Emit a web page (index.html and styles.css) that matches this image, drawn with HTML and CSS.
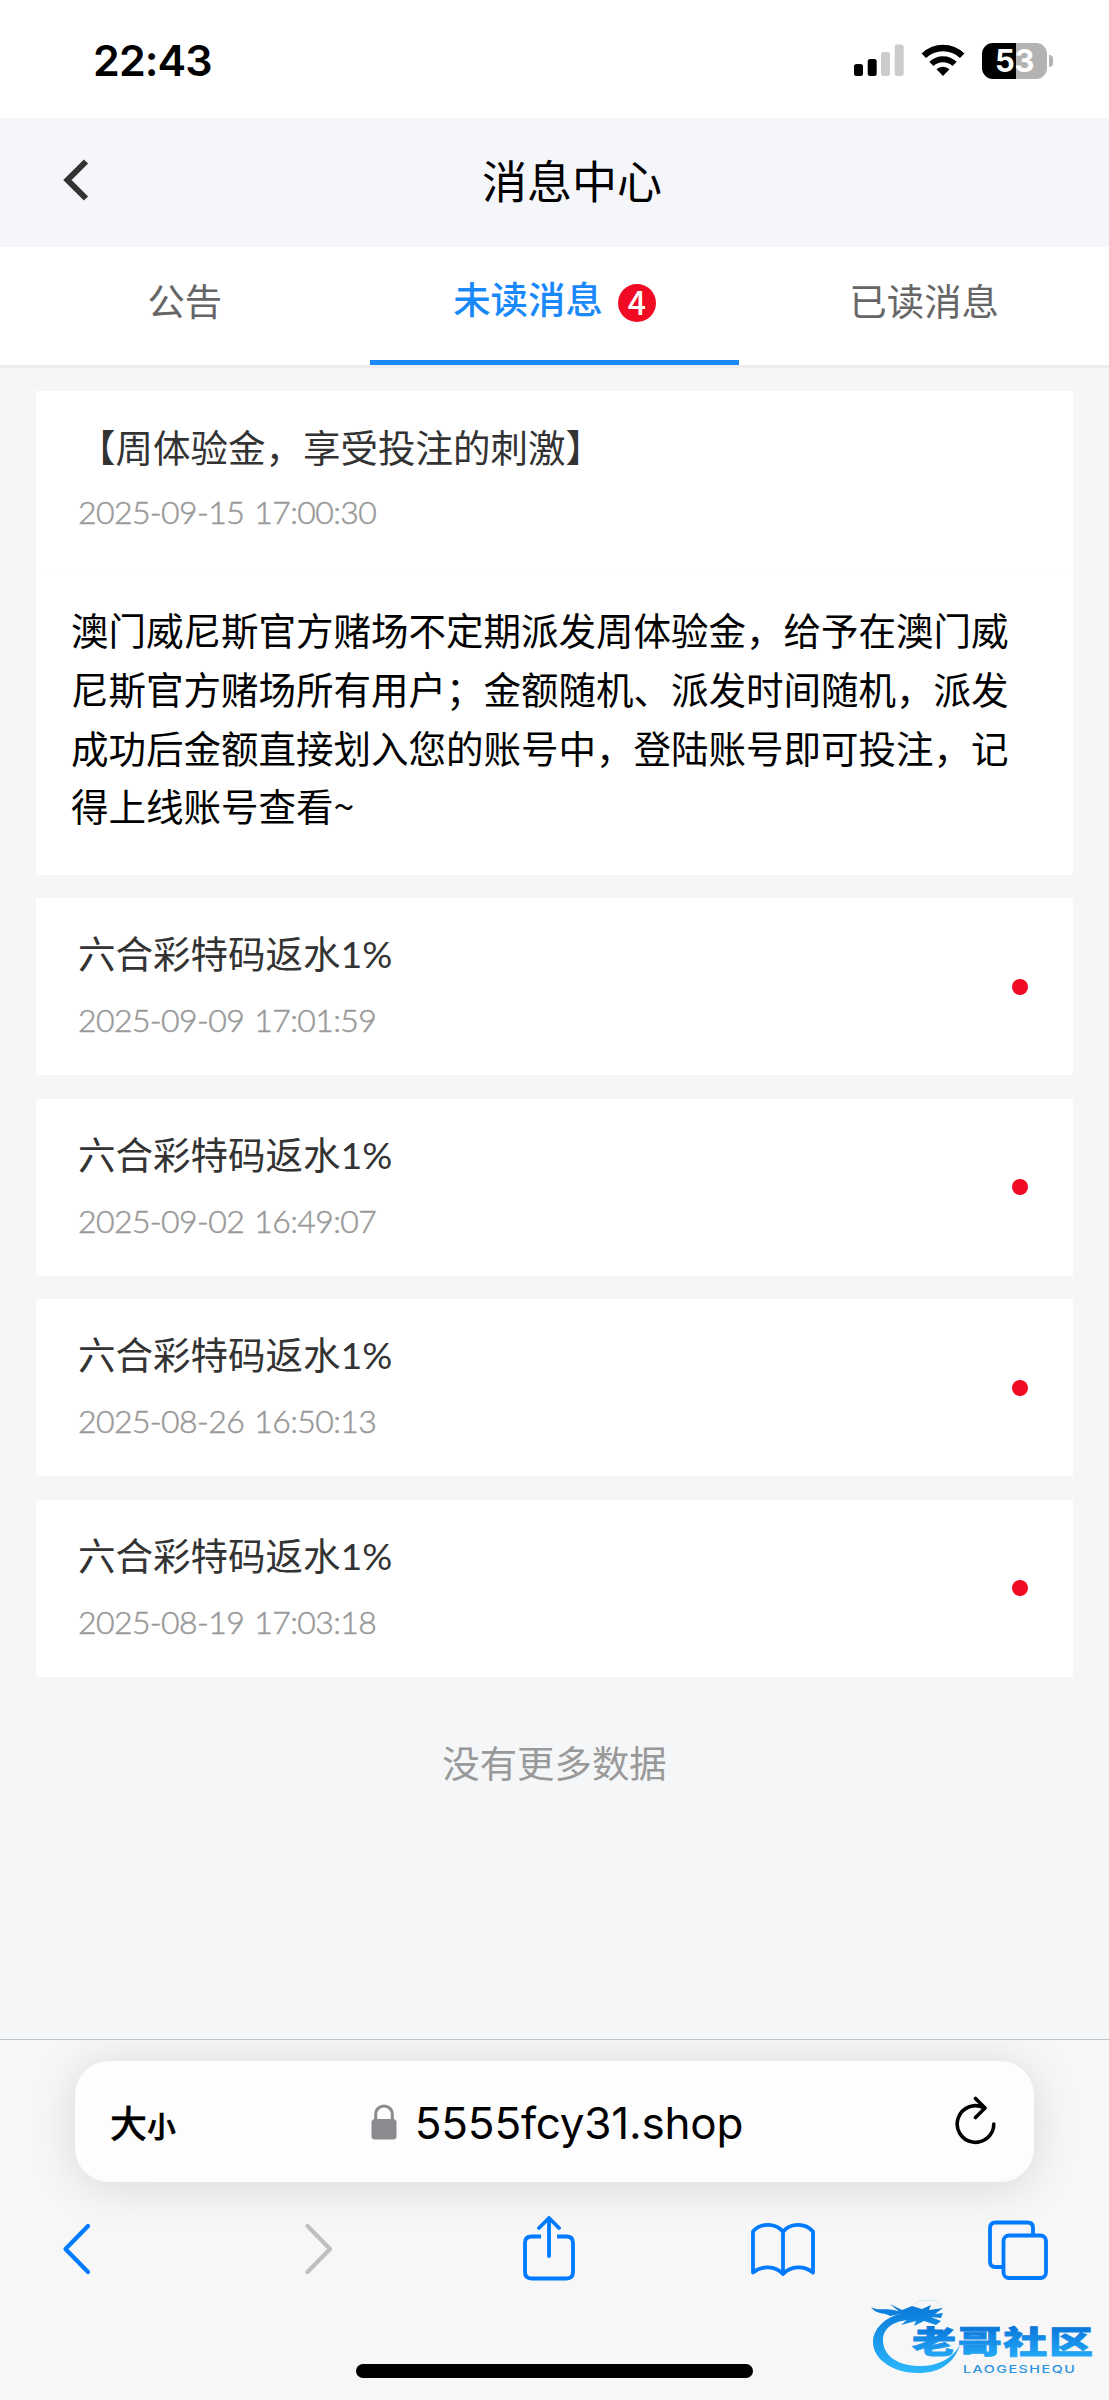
FILE: index.html
```html
<!DOCTYPE html>
<html lang="zh-CN">
<head>
  <meta charset="UTF-8">
  <meta name="viewport" content="width=device-width, initial-scale=1.0">
  <title>消息中心</title>
  <link rel="stylesheet" href="styles.css">
</head>
<body>
  <div class="status-bar">
    <span class="time">22:43</span>
    <div class="status-icons">
      <svg class="signal" width="50" height="36" viewBox="0 0 50 36">
        <rect x="0" y="21" width="9" height="12" rx="2.5"/>
        <rect x="13.7" y="16" width="9" height="17" rx="2.5"/>
        <rect x="27" y="9" width="9" height="24" rx="2.5" fill="#ccc"/>
        <rect x="40.7" y="1.5" width="9" height="31.5" rx="2.5" fill="#ccc"/>
      </svg>
      <svg class="wifi" width="44" height="36" viewBox="0 0 44 36">
        <path d="M0.6 10.5 A30.5 30.5 0 0 1 43.4 10.5 L39 15 A25 25 0 0 0 5 15 Z"/>
        <path d="M8.3 18.7 A20 20 0 0 1 35.7 18.7 L31.5 23 A14 14 0 0 0 12.5 23 Z"/>
        <path d="M15.5 26.3 A9.3 9.3 0 0 1 28.5 26.3 L22 33 Z"/>
      </svg>
      <div class="battery"><span>53</span></div>
    </div>
  </div>

  <header class="header">
    <svg class="back" width="26" height="42" viewBox="0 0 26 42">
      <path d="M23 2.5 L4.5 21 L23 39.5" fill="none" stroke="#333" stroke-width="6"/>
    </svg>
    <h1>消息中心</h1>
  </header>

  <nav class="tabs">
    <a class="tab">公告</a>
    <a class="tab active">未读消息<span class="badge">4</span></a>
    <a class="tab">已读消息</a>
  </nav>

  <main class="message-list">
    <article class="message open">
      <div class="message-head">
        <div>
          <h2>【周体验金，享受投注的刺激】</h2>
          <time>2025-09-15 17:00:30</time>
        </div>
      </div>
      <p class="message-body">澳门威尼斯官方赌场不定期派发周体验金，给予在澳门威尼斯官方赌场所有用户；金额随机、派发时间随机，派发成功后金额直接划入您的账号中，登陆账号即可投注，记得上线账号查看~</p>
    </article>
    <article class="message">
      <div class="message-head">
        <div>
          <h2>六合彩特码返水<span class="latin">1%</span></h2>
          <time>2025-09-09 17:01:59</time>
        </div>
        <i class="dot"></i>
      </div>
    </article>
    <article class="message">
      <div class="message-head">
        <div>
          <h2>六合彩特码返水<span class="latin">1%</span></h2>
          <time>2025-09-02 16:49:07</time>
        </div>
        <i class="dot"></i>
      </div>
    </article>
    <article class="message">
      <div class="message-head">
        <div>
          <h2>六合彩特码返水<span class="latin">1%</span></h2>
          <time>2025-08-26 16:50:13</time>
        </div>
        <i class="dot"></i>
      </div>
    </article>
    <article class="message">
      <div class="message-head">
        <div>
          <h2>六合彩特码返水<span class="latin">1%</span></h2>
          <time>2025-08-19 17:03:18</time>
        </div>
        <i class="dot"></i>
      </div>
    </article>
    <p class="no-more">没有更多数据</p>
  </main>

  <footer class="browser-bar">
    <div class="address">
      <div class="text-size"><span class="big">大</span><span class="small">小</span></div>
      <div class="url">
        <svg width="26" height="36" viewBox="0 0 26 36">
          <path d="M4.7 17 V10.5 C4.7 -1 21.3 -1 21.3 10.5 V17" fill="none" stroke="#8a8a8f" stroke-width="3"/>
          <rect x="0.5" y="15" width="25" height="20.5" rx="3.5" fill="#8a8a8f"/>
        </svg>
        <span>5555fcy31.shop</span>
      </div>
      <svg class="reload" width="42" height="50" viewBox="0 0 42 50" fill="none" stroke="#000" stroke-width="3.6" stroke-linecap="round" stroke-linejoin="round">
        <path d="M38.8 28 A18.3 18.3 0 1 1 29 11.8"/>
        <path d="M20.5 2.5 L30 12 L20.5 21.5"/>
      </svg>
    </div>
    <div class="toolbar">
      <svg width="36" height="66" viewBox="0 0 36 66" fill="none" stroke="#007aff" stroke-width="4.2" stroke-linecap="round" stroke-linejoin="round">
        <path d="M26 10 L3.5 33 L26 56"/>
      </svg>
      <svg width="36" height="66" viewBox="0 0 36 66" fill="none" stroke="#bfbfbf" stroke-width="4.2" stroke-linecap="round" stroke-linejoin="round">
        <path d="M10.5 10 L33 33 L10.5 56"/>
      </svg>
      <svg width="52" height="66" viewBox="0 0 52 66" fill="none" stroke="#007aff" stroke-width="3.8">
        <path d="M18 20.5 H8.5 Q2 20.5 2 27 V56 Q2 62.5 8.5 62.5 H43.5 Q50 62.5 50 56 V27 Q50 20.5 43.5 20.5 H34"/>
        <path d="M26 40 V3 M16 12 L26 2 L36 12" stroke-linecap="round" stroke-linejoin="round"/>
      </svg>
      <svg width="64" height="66" viewBox="0 0 64 66" fill="none" stroke="#007aff" stroke-width="3.8" stroke-linecap="round" stroke-linejoin="round">
        <path d="M32 58 V16 C26 7 10 6 2 15.5 V56.5 C11 49.5 24 49.5 32 58 C40 49.5 53 49.5 62 56.5 V15.5 C54 6 38 7 32 16"/>
      </svg>
      <svg width="60" height="66" viewBox="0 0 60 66" fill="none" stroke="#007aff" stroke-width="3.8">
        <path d="M45 19 V12 Q45 6.5 39.5 6.5 H7.5 Q2 6.5 2 12 V45.5 Q2 51 7.5 51 H15"/>
        <rect x="15.5" y="19.5" width="42.5" height="42.5" rx="5.5"/>
      </svg>
    </div>
    <div class="home-indicator"></div>
  </footer>

  <svg class="watermark" width="226" height="80" viewBox="0 0 226 80">
    <defs>
      <linearGradient id="logoBlue" gradientUnits="userSpaceOnUse" x1="0" y1="8" x2="0" y2="76">
        <stop offset="0" stop-color="#0878d8"/>
        <stop offset="1" stop-color="#2bb6fb"/>
      </linearGradient>
      <linearGradient id="textBlue" x1="0" y1="0" x2="0" y2="1">
        <stop offset="0.2" stop-color="#0876da"/>
        <stop offset="0.9" stop-color="#25aaf7"/>
      </linearGradient>
    </defs>
    <g fill="url(#logoBlue)">
      <path d="M35 17 C14 20 3 34 3 46 C3 64 24 77 48 77 C70 77 84 67 90 49 C82 63 68 70 50 70 C28 70 13 60 13 44 C13 33 23 24 41 24 Z"/>
      <path d="M1 11 C8 15 15 12 24 14 L35 17 L20 20 C14 16 6 19 1 11 Z"/>
      <path d="M20 8 L32 14 L42 10 L52 13 L61 9 L59 14 L73 12 L65 18 L73 17 L71 22 L61 21 L71 25 L66 29 L54 25 L44 30 L46 25 L31 29 L38 23 L24 25 L32 18 Z"/>
    </g>
    <path d="M44 8 C54 2 68 3 71 10" fill="none" stroke="#d4e8f5" stroke-width="1"/>
    <g transform="translate(42 0) scale(1.42 1)">
      <text class="logo-text" x="0" y="57.5" textLength="127.5">老哥社区</text>
    </g>
    <g transform="translate(93 0) scale(1.3 1)">
      <text class="logo-sub" x="0" y="77" textLength="86">LAOGESHEQU</text>
    </g>
  </svg>
</body>
</html>
```
FILE: styles.css
```css
/* Base styles */
* {
  margin: 0;
  padding: 0;
  box-sizing: border-box;
}

body {
  width: 1109px;
  height: 2400px;
  display: flex;
  flex-direction: column;
  position: relative;
  overflow: hidden;
  background-color: #f4f6f8;
  color: #000;
  font-family: 'Noto Sans CJK SC', sans-serif;
}

svg {
  display: block;
  flex-shrink: 0;
}

/* Status bar */
.status-bar {
  height: 118px;
  padding: 0 56px 0 93px;
  display: flex;
  justify-content: space-between;
  align-items: center;
  background-color: #fff;
}

.time {
  font: 600 43px/60px Inter, sans-serif;
  letter-spacing: -0.9px;
  margin-top: 2px;
}

.status-icons {
  display: flex;
  align-items: center;
  margin-top: 3px;
}

.signal,
.wifi {
  margin-top: 1px;
}

.wifi {
  margin-left: 17px;
  margin-right: 17px;
}

.battery {
  position: relative;
  width: 65px;
  height: 36px;
  margin-right: 6px;
  border-radius: 11px;
  background: linear-gradient(to right, #000 34px, #b3b3b3 34px);
  text-align: center;
}

.battery span {
  display: block;
  font: 700 31px/36px Inter, sans-serif;
  letter-spacing: -0.5px;
  color: #fff;
}

.battery::after {
  content: '';
  position: absolute;
  left: 67px;
  top: 12px;
  width: 4px;
  height: 12px;
  border-radius: 0 4px 4px 0;
  background-color: #b3b3b3;
}

/* Page header */
.header {
  height: 129px;
  padding: 0 63px;
  display: flex;
  align-items: center;
  background-color: #f4f6fa;
}

.back {
  margin-top: -5px;
}

.header h1 {
  flex: 1;
  margin-top: -5px;
  padding-left: 9px;
  text-align: center;
  font-size: 45px;
  line-height: 66px;
  font-weight: 400;
}

/* Tabs */
.tabs {
  height: 121px;
  display: grid;
  grid-template-columns: repeat(3, 1fr);
  background-color: #fff;
  border-bottom: 3px solid #eee;
}

.tab {
  height: 118px;
  display: flex;
  justify-content: center;
  align-items: center;
  padding-bottom: 12px;
  font-size: 37.4px;
  color: #666;
}

.tab.active {
  padding-bottom: 12px;
  border-bottom: 5px solid #1989fa;
  color: #1989fa;
  font-weight: 500;
}

.badge {
  width: 38px;
  height: 38px;
  margin: 10px 0 0 15px;
  border-radius: 50%;
  background-color: #f00a23;
  color: #fff;
  font: 500 32px/35px 'Noto Sans CJK SC', sans-serif;
  text-align: center;
}

/* Messages */
.message-list {
  flex: 1;
  padding: 23px 36px 0;
}

.message {
  height: 177px;
  margin-bottom: 23.6px;
  background-color: #fff;
}

.message.open {
  height: 484px;
  margin-bottom: 23px;
}

.message-head {
  height: 177px;
  padding: 0 45px 0 42px;
  display: flex;
  justify-content: space-between;
  align-items: center;
}

.message-head h2 {
  margin-top: -1px;
  font-size: 37.5px;
  line-height: 54px;
  font-weight: 400;
  color: #333;
}

.message-head .latin {
  font-family: Lato, sans-serif;
}

.message-head time {
  display: block;
  margin-top: 12px;
  font: 300 32px/54px Lato, sans-serif;
  letter-spacing: -0.6px;
  word-spacing: 2px;
  color: #999;
  -webkit-text-stroke: 0.5px #999;
}

.dot {
  width: 16px;
  height: 16px;
  border-radius: 50%;
  background-color: #f00a23;
}

.message-body {
  padding: 31px 35px;
  border-top: 1px solid #fcfcfc;
  font-size: 37.5px;
  line-height: 58.8px;
}

.no-more {
  margin-top: 58px;
  text-align: center;
  font-size: 37.4px;
  line-height: 54px;
  color: #999;
}

/* Browser bar */
.browser-bar {
  height: 361px;
  padding: 21px 75px 0;
  border-top: 1px solid #c3c6c9;
  background-color: #f7f7f7;
  overflow: hidden;
}

.address {
  height: 121px;
  padding: 0 37px 0 35px;
  display: grid;
  grid-template-columns: 1fr auto 1fr;
  align-items: center;
  border-radius: 34px;
  background-color: #fdfdfd;
  box-shadow: 0 4px 46px rgba(0, 0, 0, 0.13);
}

.text-size {
  display: flex;
  align-items: baseline;
  font-weight: 700;
}

.text-size .big {
  font-size: 37px;
  font-weight: 500;
  -webkit-text-stroke: 0.4px #000;
}

.text-size .small {
  font-size: 29px;
}

.url {
  display: flex;
  align-items: center;
  gap: 18px;
  padding-left: 7px;
  font: 400 44px/60px Inter, sans-serif;
  letter-spacing: -0.2px;
}

.url span {
  margin-top: 2px;
}

.reload {
  justify-self: end;
  margin-top: -2px;
}

.toolbar {
  margin: 34px -101px 0 -112px;
  display: grid;
  grid-template-columns: repeat(5, 1fr);
  justify-items: center;
  align-items: center;
}

.home-indicator {
  width: 397px;
  height: 14px;
  margin: 82px auto 0;
  border-radius: 7px;
  background-color: #000;
}

/* Logo stamped over the page corner */
.watermark {
  position: absolute;
  left: 870px;
  top: 2296px;
}

.logo-text {
  font: 900 31px 'Noto Sans CJK SC', sans-serif;
  fill: url(#textBlue);
  stroke: url(#textBlue);
  stroke-width: 0.8;
}

.logo-sub {
  font: 500 11px Inter, sans-serif;
  fill: #2b93e0;
}
```
